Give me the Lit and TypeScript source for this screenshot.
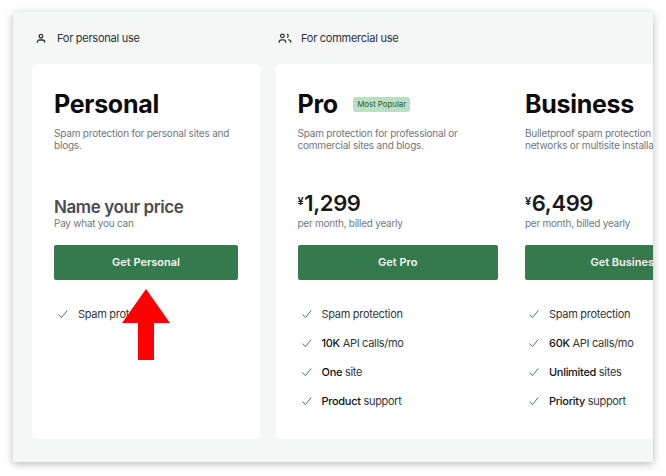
import { LitElement, html, css } from "lit";
import { customElement } from "lit/decorators.js";

const check = html`<svg class="check" viewBox="0 0 12 12" width="12" height="12"><path d="M1.6 6.6 L4.4 9.6 L10.2 2.6" fill="none" stroke="#3a7d50" stroke-width="1"/></svg>`;

const one = html`<svg class="ico" viewBox="0 0 16 16" width="16" height="16" fill="none" stroke="#333" stroke-width="1.3"><circle cx="8" cy="6.2" r="1.8"/><path d="M4.4 12.8v-.8a2 2 0 0 1 2-2h3.2a2 2 0 0 1 2 2v.8"/></svg>`;
const two = html`<svg class="ico" viewBox="0 0 16 16" width="16" height="16" fill="none" stroke="#333" stroke-width="1.25"><circle cx="5.4" cy="5.8" r="1.8"/><path d="M2.2 12.8v-.9a2 2 0 0 1 2-2h2.4a2 2 0 0 1 2 2v.9"/><path d="M10 4.1a1.8 1.8 0 0 1 0 3.4"/><path d="M11.2 9.9a2 2 0 0 1 2.6 2v.9"/></svg>`;

type Feat = [string, string];
const pro: Feat[] = [["", "Spam protection"], ["10K", " API calls/mo"], ["One", " site"], ["Product", " support"]];
const biz: Feat[] = [["", "Spam protection"], ["60K", " API calls/mo"], ["Unlimited", " sites"], ["Priority", " support"]];

@customElement("app-root")
export class AppRoot extends LitElement {
  static styles = css`
    :host { display: block; width: 666px; height: 476px; background: #fff; font-family: Inter, "Liberation Sans", sans-serif; padding: 12px 13px 14px; box-sizing: border-box; position: relative; overflow: hidden; }
    .frame { width: 640px; height: 450px; background: #f5f7f6; box-shadow: 0 2px 8px rgba(0,0,0,.28); overflow: hidden; display: grid; grid-template-columns: 228px 480px; grid-template-rows: 52px 375px; column-gap: 16px; padding-left: 19px; box-sizing: border-box; }
    .head { display: flex; align-items: center; gap: 8px; font-size: 11px; letter-spacing: -0.26px; color: #2b2f33; padding: 0 0 0 1px; height: 52px; line-height: 14px; }
    .ico { flex: none; }
    .card { background: #fff; border-radius: 6px; padding: 22px 22px 0; box-sizing: border-box; display: flex; gap: 27px; overflow: hidden; }
    .card.multi { padding-left: 21.5px; }
    .plan { flex: none; width: 184px; }
    .wide { width: 200.5px; }
    .title { display: flex; align-items: center; gap: 15.5px; height: 36px; }
    h2 { margin: 0; font-size: 25px; line-height: 36px; font-weight: 700; color: #0b0b0b; letter-spacing: -0.3px; }
    .badge { background: #b9e0c2; color: #2f5a3c; font-size: 8px; line-height: 15px; padding: 0 4px; border-radius: 3px; letter-spacing: -0.1px; }
    .desc { margin: 5px 0 0; font-size: 10px; letter-spacing: -0.2px; line-height: 12px; color: #6f767d; height: 24px; white-space: nowrap; }
    .price { margin-top: 39px; height: 26px; display: flex; align-items: center; font-size: 22px; font-weight: 600; letter-spacing: -0.4px; color: #17191b; line-height: 26px; }
    .price.name { font-size: 17px; letter-spacing: -0.42px; color: #4a4d52; align-items: flex-end; line-height: 18px; }
    .yen { font-size: 11px; font-weight: 600; margin-right: 1px; position: relative; top: -2px; }
    .sub { font-size: 10px; letter-spacing: -0.25px; line-height: 13px; color: #73797f; margin-top: 1px; white-space: nowrap; }
    .cta { margin-top: 15px; height: 35px; padding-bottom: 1px; box-sizing: border-box; background: #357a4c; border-radius: 2px; color: #f4f8f5; font-size: 11px; font-weight: 600; display: flex; align-items: center; justify-content: center; white-space: nowrap; }
    ul { list-style: none; margin: 19px 0 0; padding: 0 0 0 3px; display: flex; flex-direction: column; }
    li { height: 29px; display: flex; align-items: center; gap: 9px; font-size: 11px; letter-spacing: -0.3px; line-height: 14px; color: #32363b; white-space: pre; }
    li b { font-weight: 500; color: #111316; }
    .check { flex: none; }
    .arrow { position: absolute; left: 122px; top: 289px; }
  `;

  private feats(list: Feat[]) {
    return html`<ul>${list.map(([b, t]) => html`<li>${check}<span>${b ? html`<b>${b}</b>` : ""}${t}</span></li>`)}</ul>`;
  }

  render() {
    return html`
      <div class="frame">
        <div class="head">${one}<span>For personal use</span></div>
        <div class="head">${two}<span>For commercial use</span></div>
        <section class="card">
          <div class="plan">
            <div class="title"><h2>Personal</h2></div>
            <p class="desc">Spam protection for personal sites and<br />blogs.</p>
            <div class="price name">Name your price</div>
            <div class="sub">Pay what you can</div>
            <div class="cta">Get Personal</div>
            ${this.feats([["", "Spam protection"]])}
          </div>
        </section>
        <section class="card multi">
          <div class="plan wide">
            <div class="title"><h2>Pro</h2><span class="badge">Most Popular</span></div>
            <p class="desc">Spam protection for professional or<br />commercial sites and blogs.</p>
            <div class="price"><span class="yen">¥</span>1,299</div>
            <div class="sub">per month, billed yearly</div>
            <div class="cta">Get Pro</div>
            ${this.feats(pro)}
          </div>
          <div class="plan wide">
            <div class="title"><h2>Business</h2></div>
            <p class="desc">Bulletproof spam protection for<br />networks or multisite installations.</p>
            <div class="price"><span class="yen">¥</span>6,499</div>
            <div class="sub">per month, billed yearly</div>
            <div class="cta">Get Business</div>
            ${this.feats(biz)}
          </div>
        </section>
      </div>
      <svg class="arrow" width="48" height="72" viewBox="0 0 48 72"><path d="M24 0 L48 34 L32 34 L32 71 L16 71 L16 34 L0 34 Z" fill="#ff0000"/></svg>
    `;
  }
}
